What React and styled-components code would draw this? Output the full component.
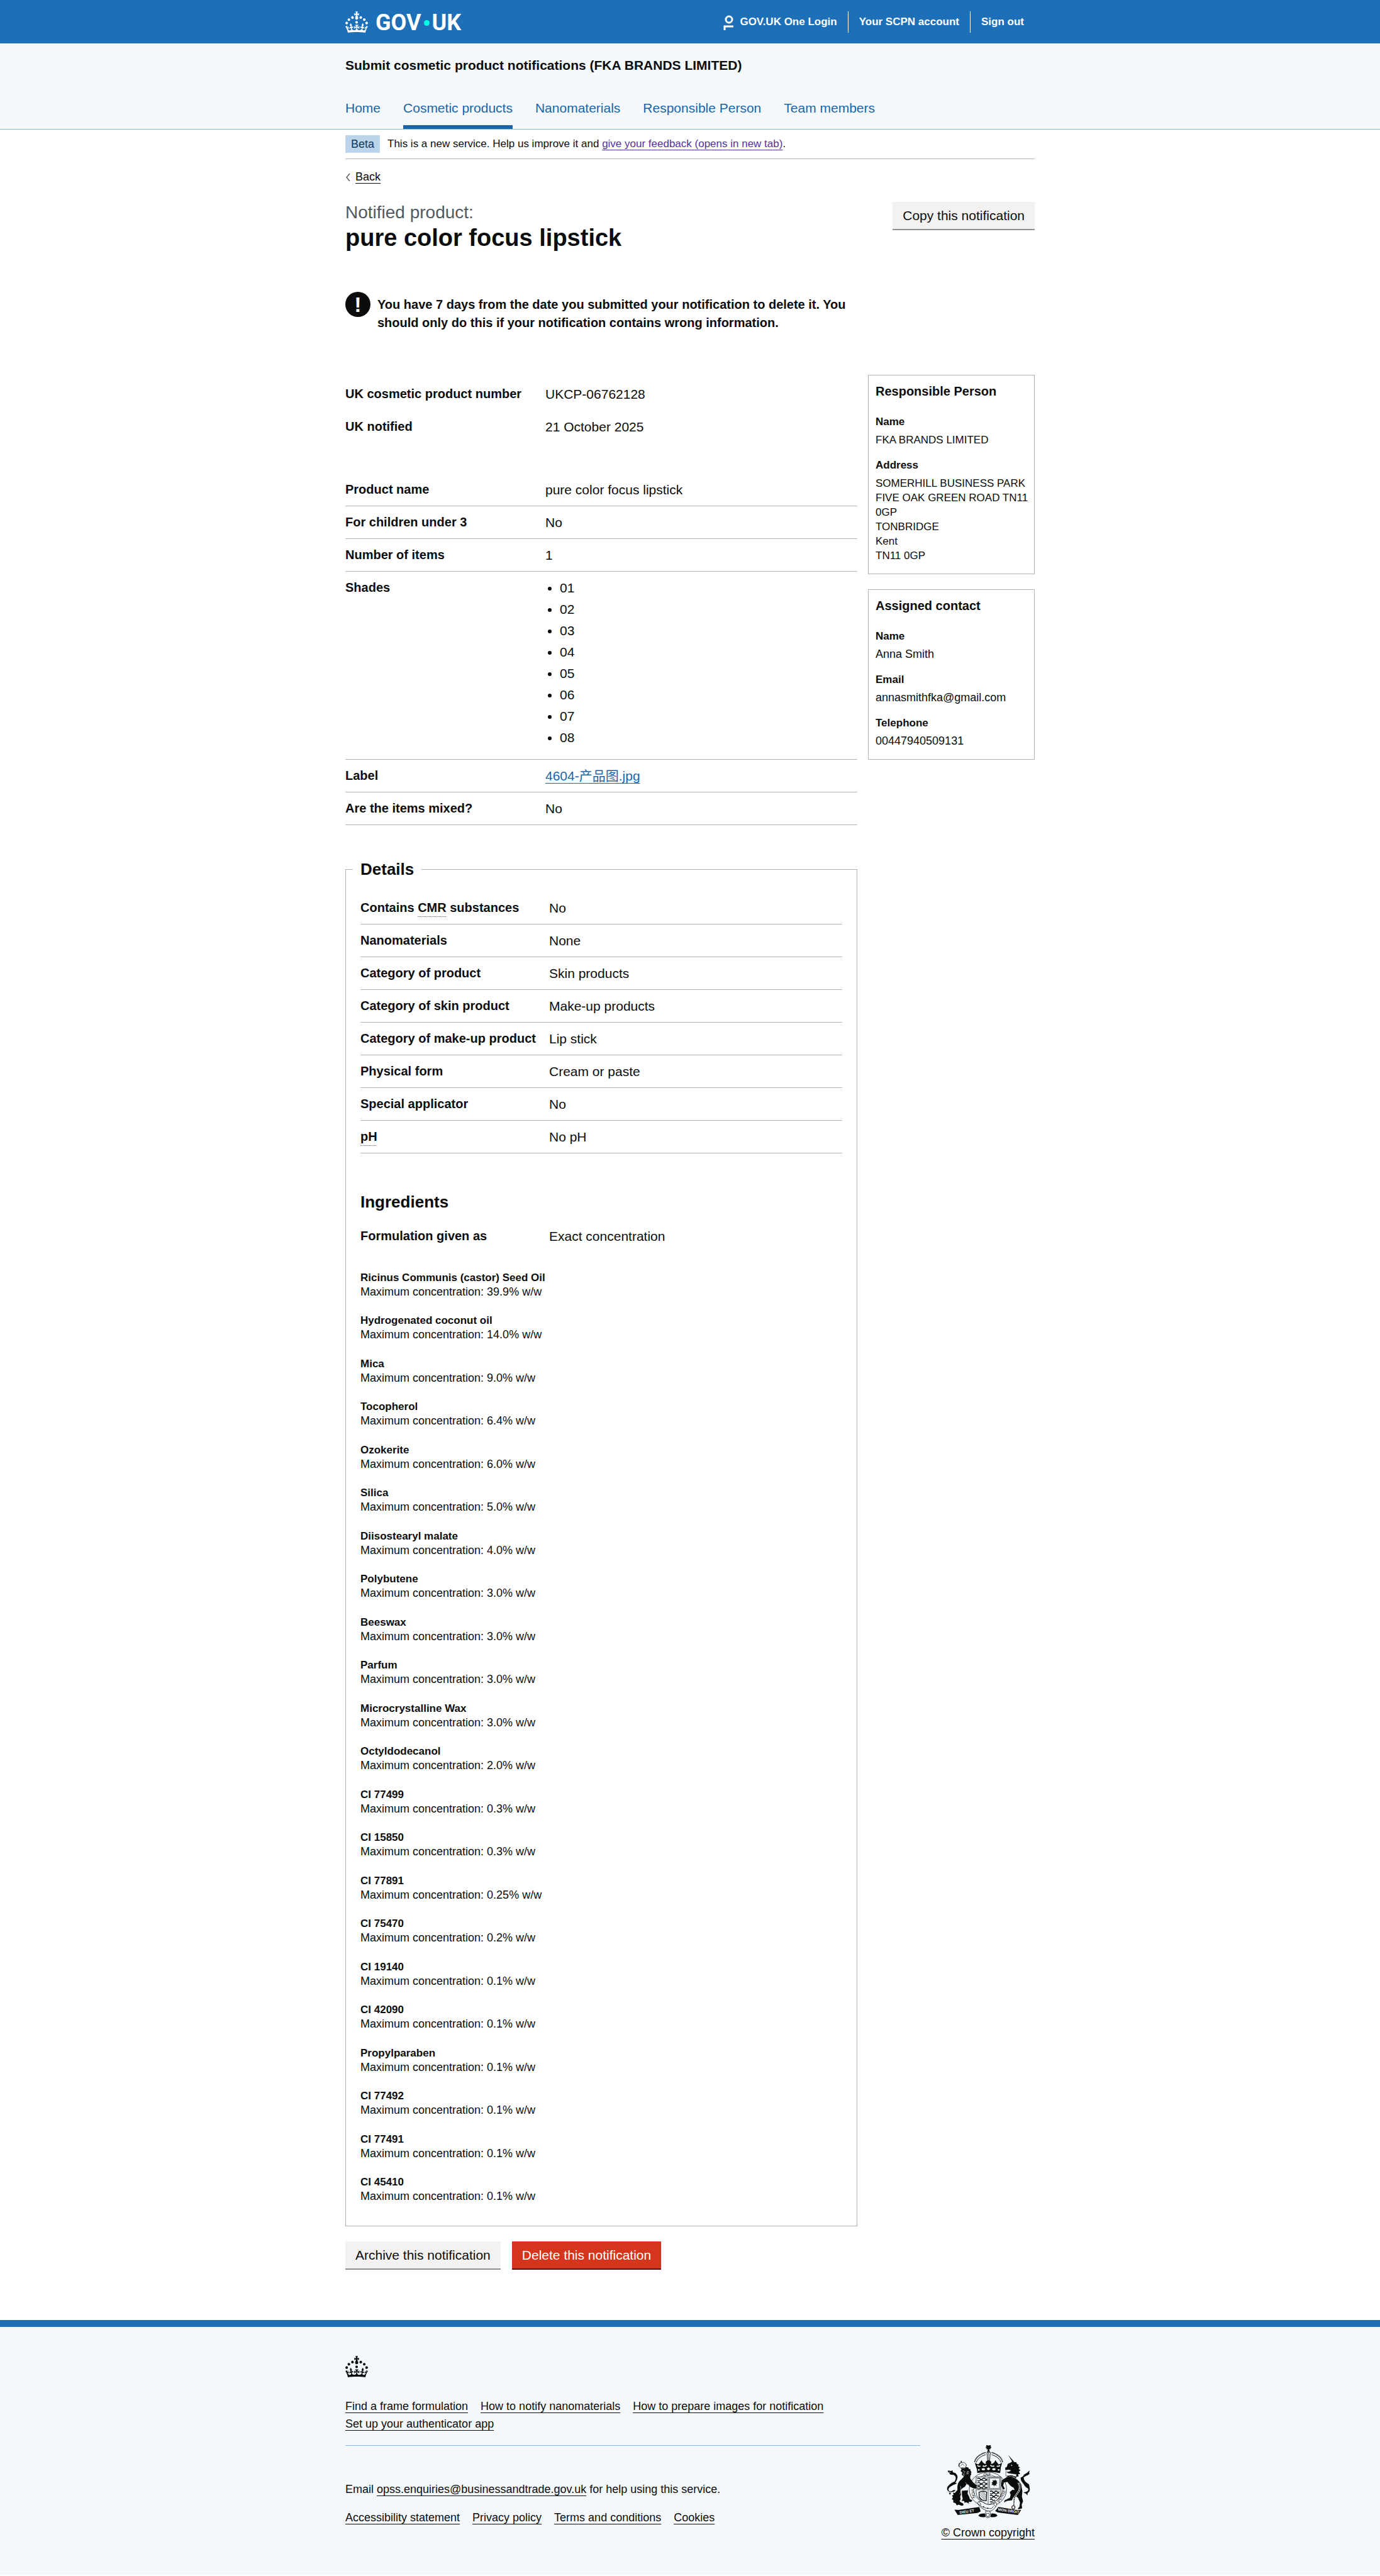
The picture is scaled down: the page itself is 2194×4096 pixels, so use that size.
import React from "react";
import styled, { createGlobalStyle } from "styled-components";

const GlobalStyle = createGlobalStyle`
  * {
    box-sizing: border-box;
  }
  body {
    margin: 0;
    background: #fff;
    color: #0b0c0c;
    font-family: "Liberation Sans", Arial, "Noto Sans CJK SC", sans-serif;
    font-size: 21px;
    line-height: 29px;
  }
  h1, h2, h3, p, ul, dl, dd {
    margin: 0;
    padding: 0;
  }
`;

const product = [
  ["Product name", "pure color focus lipstick"],
  ["For children under 3", "No"],
  ["Number of items", "1"],
];

const shades = ["01", "02", "03", "04", "05", "06", "07", "08"];

const details = [
  ["Nanomaterials", "None"],
  ["Category of product", "Skin products"],
  ["Category of skin product", "Make-up products"],
  ["Category of make-up product", "Lip stick"],
  ["Physical form", "Cream or paste"],
  ["Special applicator", "No"],
];

const ingredients = [
  ["Ricinus Communis (castor) Seed Oil", "39.9"],
  ["Hydrogenated coconut oil", "14.0"],
  ["Mica", "9.0"],
  ["Tocopherol", "6.4"],
  ["Ozokerite", "6.0"],
  ["Silica", "5.0"],
  ["Diisostearyl malate", "4.0"],
  ["Polybutene", "3.0"],
  ["Beeswax", "3.0"],
  ["Parfum", "3.0"],
  ["Microcrystalline Wax", "3.0"],
  ["Octyldodecanol", "2.0"],
  ["CI 77499", "0.3"],
  ["CI 15850", "0.3"],
  ["CI 77891", "0.25"],
  ["CI 75470", "0.2"],
  ["CI 19140", "0.1"],
  ["CI 42090", "0.1"],
  ["Propylparaben", "0.1"],
  ["CI 77492", "0.1"],
  ["CI 77491", "0.1"],
  ["CI 45410", "0.1"],
];

const Crown = () => (
  <svg width="36" height="34" viewBox="0 0 32 30" fill="currentColor" aria-hidden="true">
    <path
      fillRule="evenodd"
      d="M22.6 10.4c-1 .4-2-.1-2.4-1-.4-.9.1-2 1-2.4.9-.4 2 .1 2.4 1s-.1 2-1 2.4m-5.9 6.7c-.9.4-2-.1-2.4-1-.4-.9.1-2 1-2.4.9-.4 2 .1 2.4 1s-.1 2-1 2.4m10.8-3.7c-1 .4-2-.1-2.4-1-.4-.9.1-2 1-2.4.9-.4 2 .1 2.4 1s0 2-1 2.4m3.3 4.8c-1 .4-2-.1-2.4-1-.4-.9.1-2 1-2.4.9-.4 2 .1 2.4 1s-.1 2-1 2.4M17 4.7l2.3 1.2V2.5l-2.3.7-.2-.2.9-3h-3.4l.9 3-.2.2c-.1.1-2.3-.7-2.3-.7v3.4L15 4.7c.1.1.1.2.2.2l-1.3 4c-.1.2-.1.4-.1.6 0 1.1.8 2 1.9 2.2h.7c1-.2 1.9-1.1 1.9-2.1 0-.2 0-.4-.1-.6l-1.3-4c-.1-.2 0-.2.1-.3m-7.6 5.7c.9.4 2-.1 2.4-1 .4-.9-.1-2-1-2.4-.9-.4-2 .1-2.4 1s0 2 1 2.4m-5 3c.9.4 2-.1 2.4-1 .4-.9-.1-2-1-2.4-.9-.4-2 .1-2.4 1s.1 2 1 2.4m-3.2 4.8c.9.4 2-.1 2.4-1 .4-.9-.1-2-1-2.4-.9-.4-2 .1-2.4 1s0 2 1 2.4m14.8 11c4.4 0 8.6.3 12.3.8 1.1-4.5 2.4-7 3.7-8.8l-2.5-.9c.2 1.3.3 1.9 0 2.7-.4-.4-.8-1.1-1.1-2.3l-1.2 4c.7-.5 1.3-.8 2-.9-1.1 2.5-2.6 3.1-3.5 3-1.1-.2-1.7-1.2-1.5-2.1.3-1.2 1.5-1.5 2.1-.1 1.1-2.3-.8-3-2-2.3 1.9-1.9 2.1-3.5.6-5.6-2.1 1.6-2.1 3.2-1.2 5.5-1.2-1.4-3.2-.6-2.5 1.6.9-1.4 2.1-.5 1.9.8-.2 1.1-1.7 2.1-3.5 1.9-2.7-.2-2.9-2.1-2.9-3.6.7-.1 1.9.5 2.9 1.9l.4-4.3c-1.1 1.1-2.1 1.4-3.2 1.4.4-1.2 2.1-3 2.1-3h-5.4s1.7 1.9 2.1 3c-1.1 0-2.1-.2-3.2-1.4l.4 4.3c1-1.4 2.2-2 2.9-1.9-.1 1.5-.2 3.4-2.9 3.6-1.9.2-3.4-.8-3.5-1.9-.2-1.3 1-2.2 1.9-.8.7-2.3-1.2-3-2.5-1.6.9-2.2.9-3.9-1.2-5.5-1.5 2-1.3 3.7.6 5.6-1.2-.7-3.1 0-2 2.3.6-1.4 1.8-1.1 2.1.1.2.9-.3 1.9-1.5 2.1-.9.2-2.4-.5-3.5-3 .6 0 1.2.3 2 .9l-1.2-4c-.3 1.1-.7 1.9-1.1 2.3-.3-.8-.2-1.4 0-2.7l-2.9.9C1.3 23 2.6 25.5 3.7 30c3.7-.5 7.9-.8 12.3-.8"
    />
  </svg>
);

const LoginIcon = () => (
  <svg width="16" height="26" viewBox="0 0 16 26" fill="none" stroke="currentColor" strokeWidth="3" aria-hidden="true">
    <circle cx="9" cy="9" r="5" />
    <path d="M2 26v-6h14" />
  </svg>
);

const RoyalArms = () => (
  <svg width="134" height="118" viewBox="340 134 700 620" fill="#0b0c0c" stroke="none" aria-hidden="true">
    {/* crown */}
    <path d="M673 138q20 8 40 0l-4 16q8-4 6-8v22q0-6-8-5l3 12-11-3 1 12 6 10h-26l6-10 1-12-11 3 3-12q-8-1-8 5v-22q0 4 6 8z" />
    <path d="M680 198h28l-6 74h-16z" fill="#f4f8fb" stroke="#0b0c0c" strokeWidth="5" />
    <path d="M693 202v68" stroke="#0b0c0c" strokeWidth="6" strokeDasharray="6 4" />
    <path d="M577 280q14-56 92-80M811 280q-14-56-92-80" fill="none" stroke="#0b0c0c" strokeWidth="9" strokeDasharray="8 3" />
    <path d="M590 284q14-46 80-66M798 284q-14-46-80-66" fill="none" stroke="#0b0c0c" strokeWidth="5" />
    <path d="M579 286l18 10q14 8 18-6l8-8 12-18 10 18 10 8q8 10 18 2l-4-12q6-10 24-14 18 4 24 14l-4 12q10 8 18-2l10-8 10-18 12 18 8 8q4 14 18 6l18-10-14 48q-100-20-200 0z" />
    <path d="M600 308q14 14 26 4M645 312q20 10 32-6M709 306q12 16 32 6M762 312q14 10 26-4" fill="none" stroke="#f4f8fb" strokeWidth="9" />
    <path d="M594 328q100-18 202 0l-6 44q-98-18-190 0z" />
    <g fill="#f4f8fb">
      <ellipse cx="650" cy="340" rx="15" ry="9" />
      <ellipse cx="738" cy="340" rx="15" ry="9" />
      <path d="M693 325l16 12-16 12-16-12z" />
      <circle cx="612" cy="346" r="7" />
      <circle cx="778" cy="346" r="7" />
    </g>
    {/* garter */}
    <ellipse cx="688" cy="508" rx="156" ry="144" fill="#f4f8fb" stroke="#0b0c0c" strokeWidth="4" />
    <ellipse cx="690" cy="505" rx="122" ry="118" fill="none" stroke="#0b0c0c" strokeWidth="3" />
    <g fontFamily="Liberation Sans, sans-serif" fontSize="34">
      <text x="650" y="396">QUI</text>
      <text transform="translate(548 510) rotate(82)">HON</text>
      <text transform="translate(786 622) rotate(-62)">PENSE</text>
    </g>
    {/* shield */}
    <path d="M590 405h207v130q0 60-107 104-100-44-100-104z" fill="#f4f8fb" stroke="#0b0c0c" strokeWidth="4" />
    <path d="M600 420q12-10 22 0t22 0 22 0 16-2M600 434q12 10 22 0t22 0 22 0 16 2M600 456q12-10 22 0t22 0 22 0 16-2M600 470q12 10 22 0t22 0 22 0 16 2M600 490q12-10 22 0t22 0 22 0 16-2M600 501q12 8 22 0t22 0 22 0 16 2" fill="none" stroke="#0b0c0c" strokeWidth="7" />
    <path d="M706 528q10-10 20 0t20 0 20 0 18-2M706 542q10 10 20 0t20 0 20 0 16 2M706 562q10-10 20 0t20 0 20 0 10-2M706 576q10 10 20 0t20 0 16 0M706 596q10-10 20 0t20 0M706 610q10 8 22-2" fill="none" stroke="#0b0c0c" strokeWidth="7" />
    <path d="M701 413h86v88h-86z" fill="none" stroke="#898c8e" strokeWidth="10" />
    <path d="M728 430l12 6 10-10 4 12 12-4-6 14 8 10-12 4 4 18-14-8-6 12-8-14-14 4 8-14-8-10 12-2z" />
    <path d="M690 405v232M590 512h207" stroke="#9a9c9e" strokeWidth="9" />
    <path d="M614 532q40-16 64 0l-4 72q-44 0-58-30z" fill="none" stroke="#0b0c0c" strokeWidth="7" />
    <path d="M626 536l40 54M638 530l32 46M650 528l22 32M620 550l40 46M618 570l30 32" stroke="#0b0c0c" strokeWidth="3" />
    {/* lion */}
    <path d="M444 318q-8-30 20-36l-4-12h10l-2 12q32 0 42 24l-6 16q26 0 24 16 18 0 14 16 14 8 4 20 8 12-4 18l-2 24 18 26q24 30 44 36l-14 10 16 10-26 4q-30-4-50-26l-18-12-14 22q-22 8-38 32l6 30-8 24q10 22-6 34 14 16 28 18l8 14-14 8-30-10-14 6-10-18-20-6 2-18-14-12 10-12-8-16 14-6-6-18 16 2 22-26q-6-50 20-76l34-34-18-14 4-22-14-10 8-16-12-18z" />
    <path d="M470 520l52-4-4 28 12 22 8 24 22 12-14 12-20-2 6 16-24-12-16 4-2-14-22-2 10-18-6-22z" />
    <path d="M420 515q-20 22-52 14-30-12-18-42 22-30 60-44 24-40-8-56l-28-2-14-20 20 4-28-18 28 4 12-6 4 16 22 8q34 30-2 80l14 6-34 14q-40 20-38 40 12 24 44 0z" />
    <path d="M352 360l8-10 10 20zM362 535l18 2-10 18z" />
    <g fill="#f4f8fb" stroke="#0b0c0c" strokeWidth="3">
      <path d="M450 316q-10-26 26-34 34 4 30 30l-8 20-40-2z" />
      <path d="M460 314l16-20 16 20M464 330q20-10 32 0" />
      <path d="M478 352l20 10-10 10-8 20 18-6M512 356l18 6-20 6 16 10-20 2" fill="none" stroke="#f4f8fb" />
      <path d="M458 480q14 40-6 70M500 450q10 20 32 24" fill="none" stroke="#f4f8fb" />
    </g>
    {/* unicorn */}
    <path d="M856 220l50 56-10 8z" />
    <path d="M832 328l14-8 8-24 28-14 12-12 12 10 20 2 4 14 16 6-6 12 16 12-12 10 16 14-14 10 12 18-18 4 4 18-18 2-2 16-20-14q-24-10-52 0l-8-14 2-28 20-2 16-10-20-6-28 4z" />
    <path d="M838 358l20 14 70 10-4 22-40-12-46 6z" fill="#f4f8fb" stroke="#0b0c0c" strokeWidth="3" />
    <path d="M804 432l44-28 36-4q60 22 82 66l10 58-4 44 10 40-12 28 4 30-22 8-16-2 16-20 4-34-16-38-16-14-24 10-12 24-40 4-26 14 6-18 44-22 6-24-8-22 22-20 20 2-10-20q-32-16-50-48l-30 4-6 26 14 28-16 4-14-30z" />
    <path d="M962 410q24-10 26-24l30-18 18-18-4 20 6 4-12 14q-28 10-40 22 6 30 20 38l26 20 6 38q2 22-18 32l-2 22-12-16-22-10 26-6q20-10 14-26l-22-14q-20-30-34-48-10-14-6-30z" />
    <circle cx="886" cy="308" r="5" fill="#f4f8fb" />
    <path d="M942 450q20 30 6 70l-40 60-4 62" fill="none" stroke="#f4f8fb" strokeWidth="14" />
    <path d="M942 450q20 30 6 70l-40 60-4 62" fill="none" stroke="#0b0c0c" strokeWidth="8" strokeDasharray="10 5" />
    <circle cx="901" cy="658" r="13" fill="none" stroke="#0b0c0c" strokeWidth="6" />
    {/* motto */}
    <path d="M408 678l34 2 174-24 12 36-26 14-166 16z" />
    <path d="M966 680l-30 2-160-26-28 34 24 12 166 20z" />
    <g fill="#f4f8fb" fontFamily="Liberation Sans, sans-serif" fontWeight="700" fontSize="31">
      <text transform="translate(454 712) rotate(-8)">DIEU ET</text>
      <text transform="translate(772 686) rotate(8)">MON DROIT</text>
    </g>
    <path d="M600 622q10-20 40-10 60 46 116 4l6 24q-26 46-60 52l-20-4q-60-20-82-66z" fill="#f4f8fb" stroke="#0b0c0c" strokeWidth="4" />
    <path d="M606 630q40 40 110 40l20-20M612 614q20 10 16 28M740 620q-10 20 14 30" fill="none" stroke="#0b0c0c" strokeWidth="4" />
    <circle cx="652" cy="652" r="5" />
    <circle cx="686" cy="666" r="5" />
    <path d="M608 728q10-20 56-18l4 28q-40 10-60-10zM768 728q-10-20-52-18l-8 28q40 10 60-10z" />
    <path d="M670 690h34l8 40q-22 26-44 6z" fill="#f4f8fb" stroke="#0b0c0c" strokeWidth="4" />
    <circle cx="687" cy="722" r="14" fill="none" stroke="#0b0c0c" strokeWidth="4" />
  </svg>
);

const Container = styled.div`
  max-width: 1096px;
  margin: 0 auto;
`;

const Header = styled.header`
  background: #1d70b8;
  color: #fff;

  ${Container} {
    display: flex;
    align-items: center;
    justify-content: space-between;
    min-height: 69px;
  }
`;

const Logo = styled.a`
  display: flex;
  align-items: center;
  gap: 12px;
  color: #fff;
  text-decoration: none;
`;

const LogoWord = styled.span`
  display: flex;
  align-items: center;
  gap: 4px;
  padding-top: 4px;
  font-family: Roboto, sans-serif;
  font-size: 36px;
  font-weight: 700;
  line-height: 41px;
`;

const LogoDot = styled.span`
  width: 9px;
  height: 9px;
  border-radius: 50%;
  background: #00ffe0;
`;

const AccountLinks = styled.nav`
  display: flex;
`;

const AccountLink = styled.a`
  display: flex;
  align-items: center;
  gap: 10px;
  padding: 0 17px;
  color: #fff;
  font-size: 17px;
  font-weight: 700;
  line-height: 34px;
  text-decoration: none;

  & + & {
    border-left: 1px solid #fff;
  }
`;

const ServiceHeader = styled.div`
  background: #f4f8fb;
  border-bottom: 1px solid #8eb8dc;
  padding-top: 20px;
`;

const ServiceName = styled.p`
  font-size: 21px;
  font-weight: 700;
`;

const ServiceNav = styled.nav`
  display: flex;
  gap: 36px;
  padding-top: 21px;
`;

const ServiceLink = styled.a`
  padding: 18px 0 13px;
  border-bottom: 6px solid ${({ $active }) => ($active ? "#1a65a6" : "transparent")};
  color: #1a65a6;
  text-decoration: none;
`;

const PhaseBanner = styled.div`
  display: flex;
  align-items: center;
  gap: 12px;
  padding: 9px 0;
  border-bottom: 1px solid #b1b4b6;
  font-size: 17px;
  line-height: 28px;
`;

const Tag = styled.strong`
  padding: 0 9px;
  background: #bbd4ea;
  color: #0f385c;
  font-size: 18px;
  font-weight: 400;
`;

const Link = styled.a`
  color: ${({ $tone }) => ($tone === "visited" ? "#54319f" : $tone === "text" ? "#0b0c0c" : "#1a65a6")};
  text-decoration: underline;
  text-decoration-thickness: 1px;
  text-underline-offset: 4px;
`;

const BackRow = styled.div`
  display: flex;
  align-items: center;
  gap: 8px;
  padding: 17px 0 28px;
  font-size: 18px;
  line-height: 23px;
`;

const TitleRow = styled.div`
  display: flex;
  align-items: flex-start;
  justify-content: space-between;
`;

const Caption = styled.span`
  display: block;
  color: #505a5f;
  font-size: 28px;
  font-weight: 400;
  line-height: 34px;
`;

const Title = styled.h1`
  font-size: 38px;
  line-height: 46px;
`;

const Button = styled.button`
  padding: 7px 16px;
  border: 0;
  background: ${({ $warning }) => ($warning ? "#d4351c" : "#f3f2f1")};
  box-shadow: 0 2px 0 ${({ $warning }) => ($warning ? "#55150b" : "#929191")};
  color: ${({ $warning }) => ($warning ? "#fff" : "#0b0c0c")};
  font: inherit;
`;

const Warning = styled.div`
  display: flex;
  gap: 11px;
  max-width: 816px;
  padding-top: 63px;
`;

const WarningIcon = styled.span`
  flex: none;
  width: 40px;
  height: 40px;
  border-radius: 50%;
  background: #0b0c0c;
  color: #fff;
  font-size: 34px;
  font-weight: 700;
  line-height: 40px;
  text-align: center;
`;

const WarningText = styled.strong`
  padding-top: 6px;
  font-size: 20px;
`;

const Columns = styled.div`
  display: grid;
  grid-template-columns: minmax(0, 1fr) 265px;
  gap: 17px;
  align-items: start;
  padding: 68px 0 82px;
`;

const Main = styled.main`
  padding-top: 5px;
`;

const SummaryList = styled.dl`
  & + & {
    margin-top: 48px;
  }
`;

const Row = styled.div`
  display: grid;
  grid-template-columns: ${({ $inner }) => ($inner ? "300px" : "318px")} 1fr;
  padding: 11px 0;
  border-bottom: 1px solid ${({ $plain }) => ($plain ? "transparent" : "#b1b4b6")};

  dt {
    font-size: 20px;
    font-weight: 700;
  }
`;

const Abbr = styled.abbr`
  text-decoration: underline dotted #505a5f 1px;
  text-underline-offset: 7px;
`;

const Shades = styled.ul`
  display: grid;
  gap: 5px;
  padding: 0 0 9px 23px;

  li::marker {
    font-size: 20px;
  }
`;

const DetailsBox = styled.fieldset`
  min-width: 0;
  margin: 54px 0 24px;
  padding: 20px 23px 35px;
  border: 1px solid #b1b4b6;
`;

const Legend = styled.legend`
  margin-left: -12px;
  padding: 0 12px;
  font-size: 26px;
  font-weight: 700;
  line-height: 32px;
`;

const SubHeading = styled.h2`
  padding: 61px 0 13px;
  font-size: 26px;
  line-height: 32px;
`;

const Ingredients = styled.dl`
  padding-top: 28px;
  font-size: 18px;
  line-height: 23px;

  dt {
    font-size: 17px;
    font-weight: 700;
  }
`;

const Ingredient = styled.div`
  padding-bottom: 22px;

  &:nth-child(even) {
    padding-bottom: 23px;
  }
  &:last-child {
    padding-bottom: 0;
  }
`;

const ButtonGroup = styled.div`
  display: flex;
  gap: 18px;
`;

const Aside = styled.aside`
  display: grid;
  gap: 24px;
`;

const Card = styled.section`
  padding: 11px 6px 17px 11px;
  border: 1px solid #b1b4b6;
  font-size: 18px;
  line-height: 23px;

  h2 {
    padding-bottom: 22px;
    font-size: 20px;
    line-height: 29px;
  }
  dl {
    display: grid;
    gap: 17px;
  }
  dt {
    padding-bottom: 6px;
    font-size: 17px;
    font-weight: 700;
  }
`;

const Capitals = styled.dd`
  font-size: 17px;
`;

const Footer = styled.footer`
  padding: 46px 0 55px;
  border-top: 11px solid #1d70b8;
  background: #f4f8fb;
  font-size: 18px;
  line-height: 23px;

  ${Container} {
    display: flex;
    align-items: flex-end;
    gap: 34px;
  }
  svg {
    display: block;
  }
`;

const FooterMain = styled.div`
  flex: 1;
  padding-bottom: 24px;
`;

const FooterLinks = styled.div`
  display: flex;
  flex-wrap: wrap;
  gap: 5px 20px;
  max-width: 800px;
  padding-top: ${({ $top }) => ($top ? "35px" : "22px")};
`;

const FooterHelp = styled.p`
  margin-top: 22px;
  padding-top: 58px;
  border-top: 1px solid #8eb8dc;
`;

const Copyright = styled.div`
  display: flex;
  flex-direction: column;
  align-items: center;
  gap: 11px;
`;

const Item = ({ label, children, ...rest }) => (
  <Row {...rest}>
    <dt>{label}</dt>
    <dd>{children}</dd>
  </Row>
);

const App = () => {
  return (
    <>
      <GlobalStyle />
      <Header>
        <Container>
          <Logo href="#" aria-label="GOV.UK">
            <Crown />
            <LogoWord>
              GOV
              <LogoDot />
              UK
            </LogoWord>
          </Logo>
          <AccountLinks>
            <AccountLink href="#">
              <LoginIcon />
              GOV.UK One Login
            </AccountLink>
            <AccountLink href="#">Your SCPN account</AccountLink>
            <AccountLink href="#">Sign out</AccountLink>
          </AccountLinks>
        </Container>
      </Header>

      <ServiceHeader>
        <Container>
          <ServiceName>Submit cosmetic product notifications (FKA BRANDS LIMITED)</ServiceName>
          <ServiceNav>
            <ServiceLink href="#">Home</ServiceLink>
            <ServiceLink href="#" $active>Cosmetic products</ServiceLink>
            <ServiceLink href="#">Nanomaterials</ServiceLink>
            <ServiceLink href="#">Responsible Person</ServiceLink>
            <ServiceLink href="#">Team members</ServiceLink>
          </ServiceNav>
        </Container>
      </ServiceHeader>

      <Container>
        <PhaseBanner>
          <Tag>Beta</Tag>
          <span>
            This is a new service. Help us improve it and{" "}
            <Link href="#" $tone="visited">give your feedback (opens in new tab)</Link>.
          </span>
        </PhaseBanner>
        <BackRow>
          <svg width="8" height="14" viewBox="0 0 8 14" fill="none" stroke="#505a5f" strokeWidth="1.4" aria-hidden="true">
            <path d="M7 1L2 7l5 6" />
          </svg>
          <Link href="#" $tone="text">Back</Link>
        </BackRow>
        <TitleRow>
          <Title>
            <Caption>Notified product:</Caption>
            pure color focus lipstick
          </Title>
          <Button type="button">Copy this notification</Button>
        </TitleRow>
        <Warning>
          <WarningIcon aria-hidden="true">!</WarningIcon>
          <WarningText>
            You have 7 days from the date you submitted your notification to delete it. You should only do this if your
            notification contains wrong information.
          </WarningText>
        </Warning>

        <Columns>
          <Main>
            <SummaryList>
              <Item label="UK cosmetic product number" $plain>UKCP-06762128</Item>
              <Item label="UK notified" $plain>21 October 2025</Item>
            </SummaryList>
            <SummaryList>
              {product.map(([label, value]) => (
                <Item key={label} label={label}>{value}</Item>
              ))}
              <Item label="Shades">
                <Shades>
                  {shades.map((shade) => (
                    <li key={shade}>{shade}</li>
                  ))}
                </Shades>
              </Item>
              <Item label="Label">
                <Link href="#">4604-产品图.jpg</Link>
              </Item>
              <Item label="Are the items mixed?">No</Item>
            </SummaryList>

            <DetailsBox>
              <Legend>Details</Legend>
              <SummaryList>
                <Item
                  $inner
                  label={
                    <>
                      Contains <Abbr title="Carcinogenic, mutagenic, reprotoxic">CMR</Abbr> substances
                    </>
                  }
                >
                  No
                </Item>
                {details.map(([label, value]) => (
                  <Item key={label} label={label} $inner>{value}</Item>
                ))}
                <Item $inner label={<Abbr title="Power of hydrogen">pH</Abbr>}>No pH</Item>
              </SummaryList>
              <SubHeading>Ingredients</SubHeading>
              <SummaryList>
                <Item label="Formulation given as" $inner $plain>Exact concentration</Item>
              </SummaryList>
              <Ingredients>
                {ingredients.map(([name, amount]) => (
                  <Ingredient key={name}>
                    <dt>{name}</dt>
                    <dd>Maximum concentration: {amount}% w/w</dd>
                  </Ingredient>
                ))}
              </Ingredients>
            </DetailsBox>

            <ButtonGroup>
              <Button type="button">Archive this notification</Button>
              <Button type="button" $warning>Delete this notification</Button>
            </ButtonGroup>
          </Main>

          <Aside>
            <Card>
              <h2>Responsible Person</h2>
              <dl>
                <div>
                  <dt>Name</dt>
                  <Capitals>FKA BRANDS LIMITED</Capitals>
                </div>
                <div>
                  <dt>Address</dt>
                  <Capitals>
                    SOMERHILL BUSINESS PARK
                    <br />
                    FIVE OAK GREEN ROAD TN11 0GP
                    <br />
                    TONBRIDGE
                    <br />
                    Kent
                    <br />
                    TN11 0GP
                  </Capitals>
                </div>
              </dl>
            </Card>
            <Card>
              <h2>Assigned contact</h2>
              <dl>
                <div>
                  <dt>Name</dt>
                  <dd>Anna Smith</dd>
                </div>
                <div>
                  <dt>Email</dt>
                  <dd>annasmithfka@gmail.com</dd>
                </div>
                <div>
                  <dt>Telephone</dt>
                  <dd>00447940509131</dd>
                </div>
              </dl>
            </Card>
          </Aside>
        </Columns>
      </Container>

      <Footer>
        <Container>
          <FooterMain>
            <Crown />
            <FooterLinks $top>
              <Link href="#" $tone="text">Find a frame formulation</Link>
              <Link href="#" $tone="text">How to notify nanomaterials</Link>
              <Link href="#" $tone="text">How to prepare images for notification</Link>
              <Link href="#" $tone="text">Set up your authenticator app</Link>
            </FooterLinks>
            <FooterHelp>
              Email <Link href="#" $tone="text">opss.enquiries@businessandtrade.gov.uk</Link> for help using this service.
            </FooterHelp>
            <FooterLinks>
              <Link href="#" $tone="text">Accessibility statement</Link>
              <Link href="#" $tone="text">Privacy policy</Link>
              <Link href="#" $tone="text">Terms and conditions</Link>
              <Link href="#" $tone="text">Cookies</Link>
            </FooterLinks>
          </FooterMain>
          <Copyright>
            <RoyalArms />
            <Link href="#" $tone="text">© Crown copyright</Link>
          </Copyright>
        </Container>
      </Footer>
    </>
  );
};

export default App;
